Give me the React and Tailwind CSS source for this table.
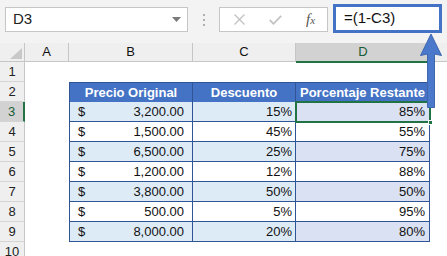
import React from "react";

const rows = [
  { n: 3, p: "3,200.00", d: "15%", r: "85%" },
  { n: 4, p: "1,500.00", d: "45%", r: "55%" },
  { n: 5, p: "6,500.00", d: "25%", r: "75%" },
  { n: 6, p: "1,200.00", d: "12%", r: "88%" },
  { n: 7, p: "3,800.00", d: "50%", r: "50%" },
  { n: 8, p: "500.00", d: "5%", r: "95%" },
  { n: 9, p: "8,000.00", d: "20%", r: "80%" },
];

function RowHeader({ n, selected }) {
  return (
    <div
      className={
        "w-[25px] h-[20px] shrink-0 flex items-center justify-center border-b border-[#d4d4d4] " +
        (selected
          ? "bg-[#d2d2d2] text-[#185c37] border-r-2 border-r-[#217346]"
          : "bg-[#efefef] text-[#222] border-r border-r-[#c6c6c6]")
      }
    >
      {n}
    </div>
  );
}

export default function App() {
  return (
    <div
      className="relative w-[447px] h-[256px] overflow-hidden bg-white text-[13px] text-[#111]"
      style={{ fontFamily: '"Liberation Sans", Arial, sans-serif' }}
    >
      {/* formula bar */}
      <div className="h-[43px] bg-[#f3f3f3] flex items-start pt-[7px] pl-[5px]">
        <div className="w-[183px] h-[25px] bg-white border border-[#c6c6c6] flex items-center pl-[7px] pr-[6px] justify-between">
          <span className="text-[15px] text-[#222]">D3</span>
          <svg width="9" height="6" viewBox="0 0 9 6">
            <path d="M0 0H9L4.5 5Z" fill="#7a7a7a" />
          </svg>
        </div>
        <div className="w-[31px] h-[25px] flex flex-col items-center justify-center gap-[3px]">
          <div className="w-[2px] h-[2px] bg-[#b0b0b0]" />
          <div className="w-[2px] h-[2px] bg-[#b0b0b0]" />
          <div className="w-[2px] h-[2px] bg-[#b0b0b0]" />
        </div>
        <div className="w-[109px] h-[25px] bg-white border border-[#c6c6c6] flex items-center">
          <div className="w-[37px] flex justify-center pl-[2px]">
            <svg width="11" height="11" viewBox="0 0 11 11">
              <path d="M0.5 0.5L10.5 10.5M10.5 0.5L0.5 10.5" stroke="#c3c3c3" strokeWidth="1.4" />
            </svg>
          </div>
          <div className="w-[37px] flex justify-center">
            <svg width="13" height="10" viewBox="0 0 13 10">
              <path d="M0.8 5L4.5 8.8L12.2 0.8" stroke="#c3c3c3" strokeWidth="1.8" fill="none" />
            </svg>
          </div>
          <div className="w-[33px] flex justify-center">
            <span
              className="italic text-[15px] text-[#555]"
              style={{ fontFamily: '"Liberation Serif", serif' }}
            >
              f<span className="text-[11px]">x</span>
            </span>
          </div>
        </div>
        <div className="ml-[5px] -mt-[3px] w-[109px] h-[29px] bg-white border-[3px] border-[#4472c4] flex items-center pl-[8px]">
          <span className="text-[15px] text-[#111]">=(1-C3)</span>
        </div>
      </div>

      {/* column headers */}
      <div className="flex h-[19px] border-b border-[#c6c6c6] bg-[#efefef]">
        <div className="w-[25px] shrink-0 border-r border-[#c6c6c6] flex items-end justify-end p-[2px]">
          <svg width="12" height="11" viewBox="0 0 12 11">
            <path d="M12 0V11H0Z" fill="#c8c8c8" />
          </svg>
        </div>
        <div className="w-[44px] shrink-0 border-r border-[#c6c6c6] flex items-center justify-center">A</div>
        <div className="w-[124px] shrink-0 border-r border-[#c6c6c6] flex items-center justify-center">B</div>
        <div className="w-[103px] shrink-0 border-r border-[#c6c6c6] flex items-center justify-center">C</div>
        <div className="w-[134px] h-[20px] shrink-0 bg-[#d2d2d2] border-b-2 border-[#217346] text-[#185c37] flex items-center justify-center">
          D
        </div>
        <div className="flex-1" />
      </div>

      {/* row 1 */}
      <div className="flex">
        <RowHeader n={1} />
      </div>

      {/* row 2 header */}
      <div className="flex">
        <RowHeader n={2} />
        <div className="w-[44px] shrink-0" />
        <div className="w-[361px] shrink-0 flex h-[20px] bg-[#4472c4] text-white font-bold border border-[#2f5597] border-b-0">
          <div className="w-[123px] shrink-0 border-r border-[#2f5597] flex items-center justify-center pt-[1px]">
            Precio Original
          </div>
          <div className="w-[103px] shrink-0 border-r border-[#2f5597] flex items-center justify-center pt-[1px]">
            Descuento
          </div>
          <div className="w-[133px] shrink-0 flex items-center justify-center pt-[1px]">
            Porcentaje Restante
          </div>
        </div>
      </div>

      {rows.map((r, i) => {
        const band = i % 2 === 0;
        return (
          <div className="flex" key={r.n}>
            <RowHeader n={r.n} selected={r.n === 3} />
            <div className="w-[44px] shrink-0" />
            <div
              className={
                "w-[124px] shrink-0 h-[20px] flex items-center justify-between pl-[8px] pr-[8px] border-l border-r border-b border-[#2f5597] " +
                (band ? "bg-[#ddebf7]" : "bg-white")
              }
            >
              <span>$</span>
              <span>{r.p}</span>
            </div>
            <div
              className={
                "w-[103px] shrink-0 h-[20px] flex items-center justify-end pr-[3px] border-r border-b border-[#2f5597] " +
                (band ? "bg-[#ddebf7]" : "bg-white")
              }
            >
              {r.d}
            </div>
            <div
              className={
                "w-[134px] shrink-0 h-[20px] flex items-center justify-end pr-[4px] border-r border-b border-[#2f5597] " +
                (band ? "bg-[#d9e1f2]" : "bg-white")
              }
            >
              {r.r}
            </div>
          </div>
        );
      })}

      <div className="flex">
        <RowHeader n={10} />
      </div>

      {/* selection */}
      <div className="absolute left-[295px] top-[101px] w-[136px] h-[22px] border-2 border-[#217346] pointer-events-none" />
      <div className="absolute left-[428px] top-[120px] w-[5px] h-[5px] bg-[#217346] border border-white" />

      {/* arrow */}
      <svg className="absolute left-[419px] top-[33px]" width="24" height="76" viewBox="0 0 24 76">
        <path
          d="M12 1L22.5 22.5L15.5 21V74.5H8.5V21L1.5 22.5Z"
          fill="#4a78cb"
          stroke="#3f67b0"
          strokeWidth="1"
        />
      </svg>
    </div>
  );
}
